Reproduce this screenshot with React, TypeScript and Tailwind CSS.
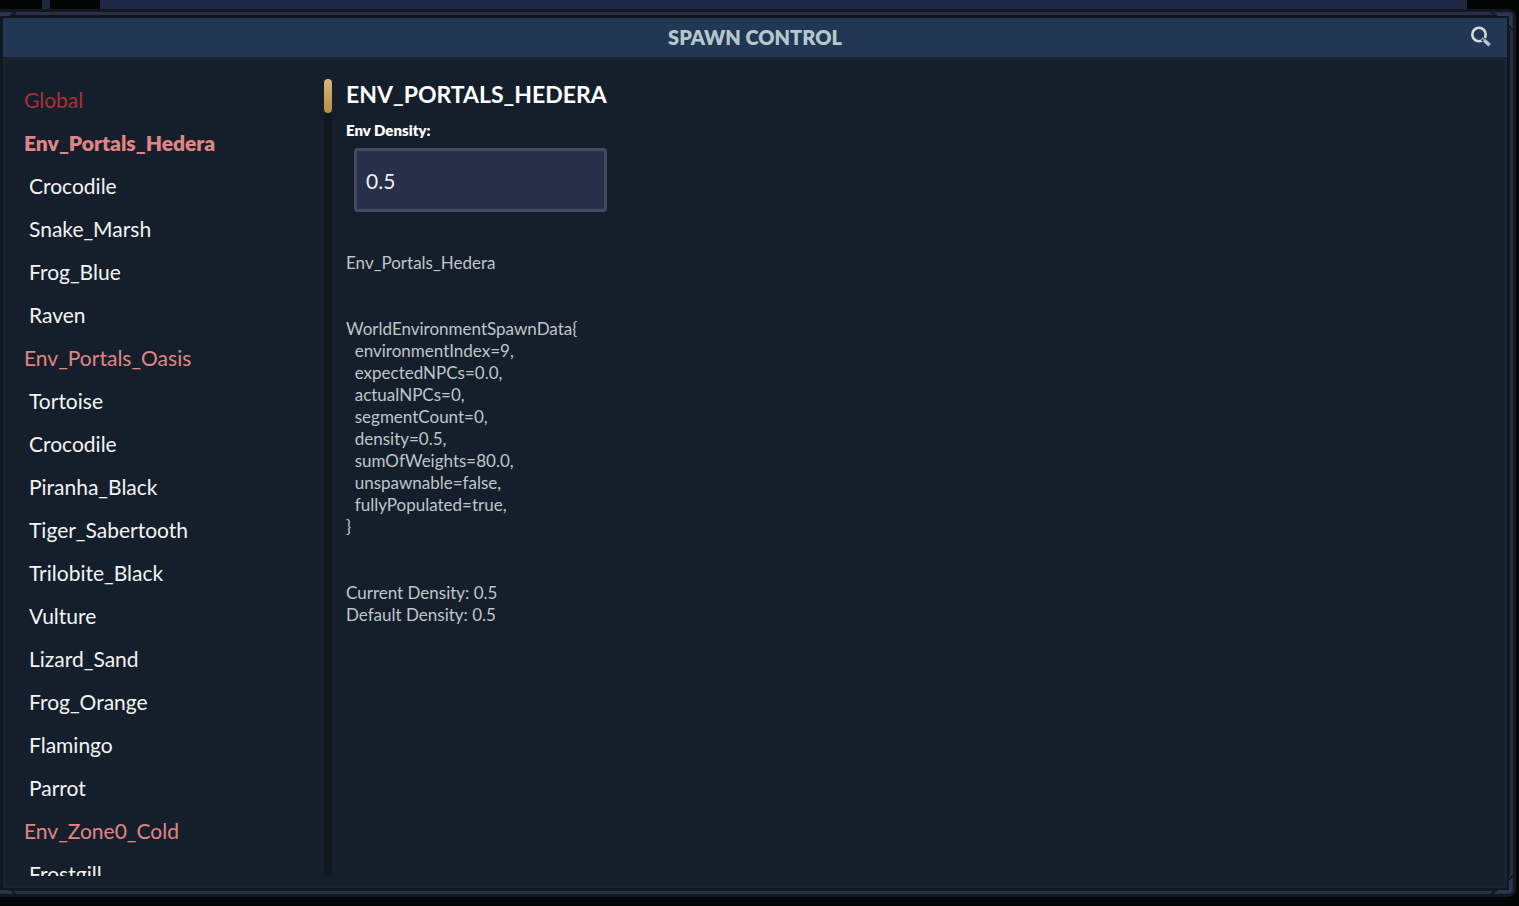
import { useState } from "react";

interface SpawnEntry {
  name: string;
  kind: "global" | "env" | "npc";
}

const entries: SpawnEntry[] = [
  { name: "Global", kind: "global" },
  { name: "Env_Portals_Hedera", kind: "env" },
  { name: "Crocodile", kind: "npc" },
  { name: "Snake_Marsh", kind: "npc" },
  { name: "Frog_Blue", kind: "npc" },
  { name: "Raven", kind: "npc" },
  { name: "Env_Portals_Oasis", kind: "env" },
  { name: "Tortoise", kind: "npc" },
  { name: "Crocodile", kind: "npc" },
  { name: "Piranha_Black", kind: "npc" },
  { name: "Tiger_Sabertooth", kind: "npc" },
  { name: "Trilobite_Black", kind: "npc" },
  { name: "Vulture", kind: "npc" },
  { name: "Lizard_Sand", kind: "npc" },
  { name: "Frog_Orange", kind: "npc" },
  { name: "Flamingo", kind: "npc" },
  { name: "Parrot", kind: "npc" },
  { name: "Env_Zone0_Cold", kind: "env" },
  { name: "Frostgill", kind: "npc" },
];

const kindClass = {
  global: "pl-[18px] text-[#a83232]",
  env: "pl-[18px] text-[#e08585]",
  npc: "pl-[23px] text-[#f2f4f5]",
};

const details = `Env_Portals_Hedera


WorldEnvironmentSpawnData{
  environmentIndex=9,
  expectedNPCs=0.0,
  actualNPCs=0,
  segmentCount=0,
  density=0.5,
  sumOfWeights=80.0,
  unspawnable=false,
  fullyPopulated=true,
}


Current Density: 0.5
Default Density: 0.5`;

const SearchIcon = () => (
  <svg width="22" height="22" viewBox="0 0 22 22" fill="none">
    <circle cx="9" cy="8.5" r="6.7" stroke="#d3dadd" strokeWidth="2.6" />
    <path d="M11 14.6l2.8-3.4 2.2 1.8-2.6 3z" fill="#213754" />
    <path d="M12 11.6l2.4 2.6" stroke="#a9b6c5" strokeWidth="1.4" />
    <path d="M14.2 14.2l5.4 5" stroke="#b9c4d6" strokeWidth="3.6" />
  </svg>
);

// brighter corner piece of the frame, closed off by a slanted notch at each end
const FrameCorner = ({ className }: { className: string }) => (
  <svg className={className} width="24" height="24" viewBox="0 0 24 24" fill="none">
    <path d="M4 4.5H17.5Q19.5 4.5 19.5 6.5V20" stroke="#2b3650" strokeWidth="3" />
    <path d="M0 1.5l6 5M17 15.5l5 5" stroke="#10171f" strokeWidth="2" />
  </svg>
);

const SpawnList = ({
  selected,
  onSelect,
}: {
  selected: number;
  onSelect: (index: number) => void;
}) => (
  <div className="flex w-[326px] shrink-0">
    <ul className="min-w-0 flex-1 overflow-hidden">
      {entries.map((entry, i) => (
        <li key={i}>
          <button
            onClick={() => onSelect(i)}
            className={`block h-[43px] w-full pb-0.5 text-left text-[21px] ${kindClass[entry.kind]} ${
              selected === i ? "font-extrabold" : ""
            }`}
          >
            {entry.name}
          </button>
        </li>
      ))}
    </ul>
    <div className="w-2 rounded-b-sm bg-[#10171f]">
      <div className="h-[34px] rounded-full bg-linear-to-b from-[#d9b478] to-[#b98d43]" />
    </div>
  </div>
);

const EnvDetails = () => {
  const [density, setDensity] = useState("0.5");

  return (
    <section className="min-w-0 flex-1 pt-px pl-[14px]">
      <h2 className="text-[23px] leading-7 font-bold text-white">ENV_PORTALS_HEDERA</h2>
      <label htmlFor="density" className="mt-3 block text-[15px] leading-5 font-extrabold text-white">
        Env Density:
      </label>
      <input
        id="density"
        value={density}
        onChange={(e) => setDensity(e.target.value)}
        className="mt-2 ml-2 block h-16 w-[253px] rounded border-3 border-[#434a5f] bg-[#272f49] px-[9px] text-[21px] text-[#eef0f4] outline-none"
      />
      <pre className="mt-10 font-[Lato,sans-serif] text-[17px] leading-[22px] text-[#bfc5ca]">
        {details}
      </pre>
    </section>
  );
};

const App = () => {
  const [selected, setSelected] = useState(1);

  return (
    <div className="flex h-screen flex-col bg-[#020503] font-[Lato,sans-serif]">
      <div className="flex h-[9px] shrink-0">
        <div className="w-[42px]" />
        <div className="w-2 bg-[#1c2742]" />
        <div className="w-[50px]" />
        <div className="flex-1 bg-[#1d2744]" />
        <div className="w-[52px]" />
      </div>
      <div className="relative mr-[3px] mb-[9px] flex min-h-0 flex-1 rounded-r-lg border-3 border-l-0 border-[#121922]">
        <div className="flex min-w-0 flex-1 rounded-r border-3 border-l-0 border-[#282e43]">
          <main className="flex min-w-0 flex-1 flex-col border-3 border-[#10171f] bg-[#151f2b]">
            <header className="flex h-[39px] shrink-0 items-center bg-[#213754] pr-[15px] pb-0.5 pl-[37px]">
              <h1 className="flex-1 text-center text-[20px] font-extrabold text-[#b4c8cb]">
                SPAWN CONTROL
              </h1>
              <button aria-label="Search">
                <SearchIcon />
              </button>
            </header>
            <div className="flex min-h-0 flex-1 border-3 border-t-2 border-[#18232f] pt-5 pb-[9px]">
              <SpawnList selected={selected} onSelect={setSelected} />
              <EnvDetails />
            </div>
          </main>
        </div>
        <FrameCorner className="absolute -top-[2px] -right-[2px]" />
        <FrameCorner className="absolute -right-[2px] -bottom-[2px] -scale-y-100" />
        <FrameCorner className="absolute -top-[2px] -left-[8px] -scale-x-100" />
        <FrameCorner className="absolute -bottom-[2px] -left-[8px] -scale-100" />
      </div>
    </div>
  );
};

export default App;
